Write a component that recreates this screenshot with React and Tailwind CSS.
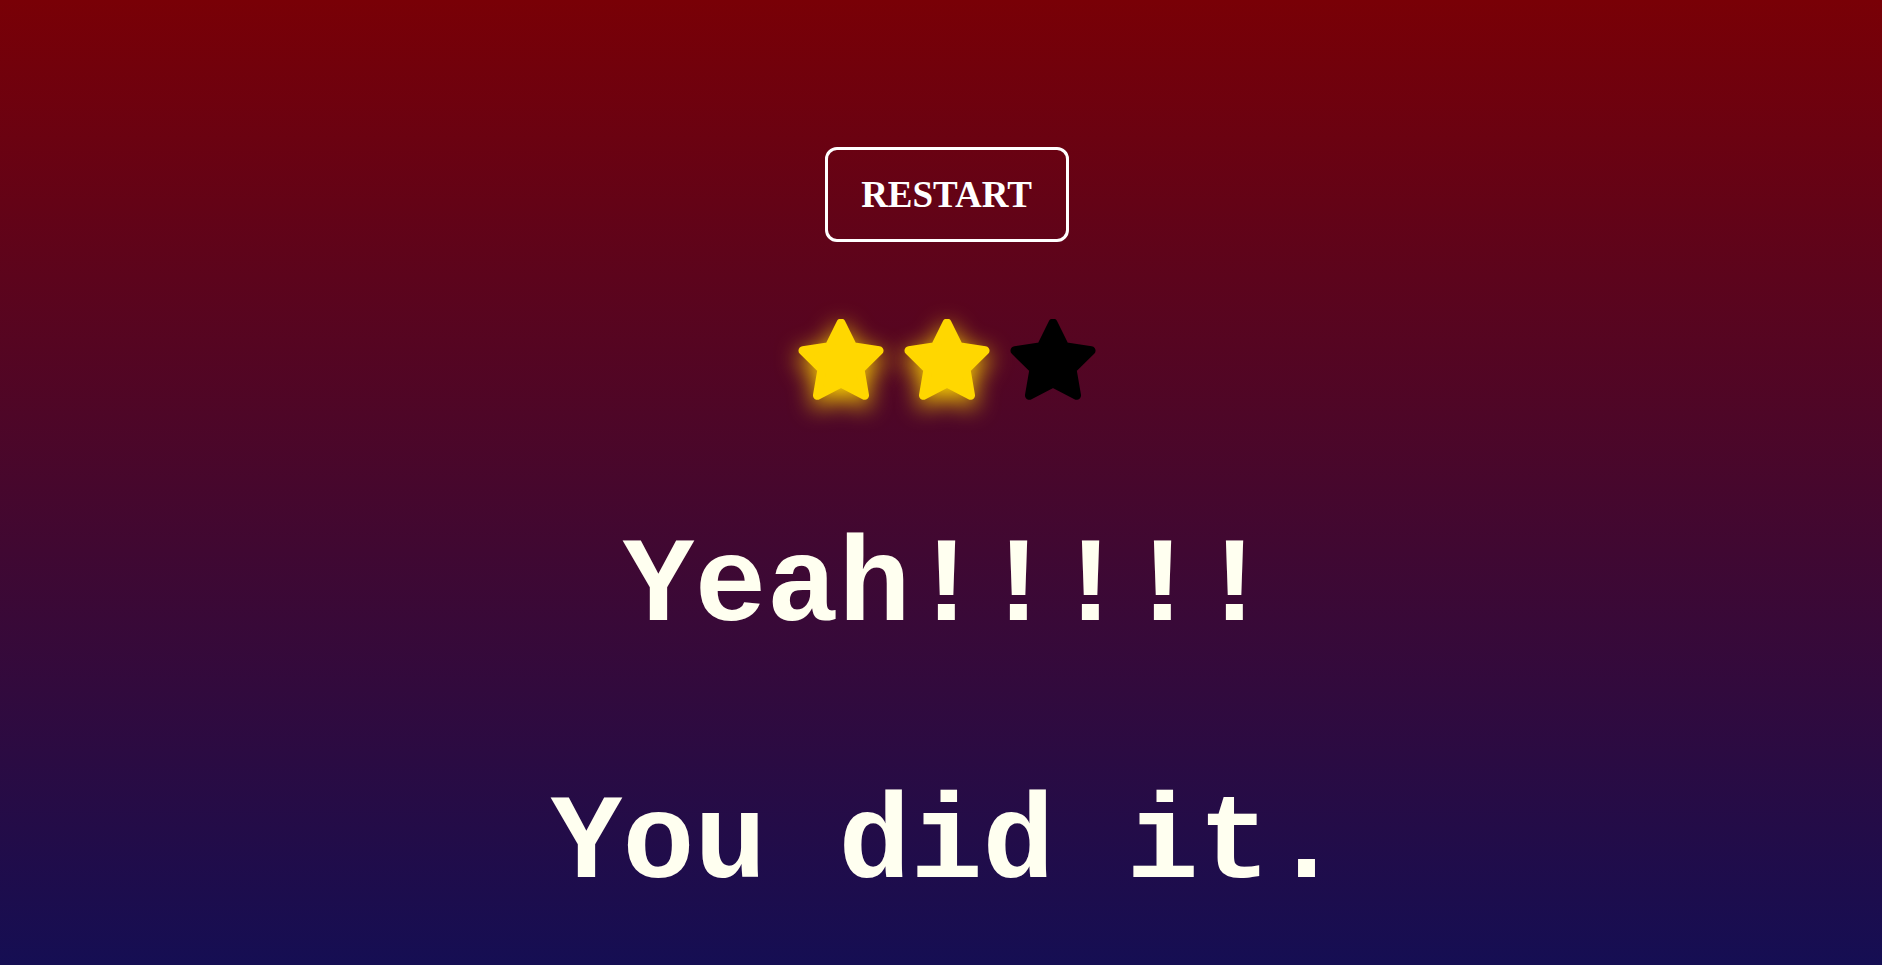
import React from 'react';

const Star = ({ filled }) => {
  const pts = [];
  for (let i = 0; i < 10; i++) {
    const r = i % 2 === 0 ? 40 : 20;
    const a = (Math.PI / 5) * i - Math.PI / 2;
    pts.push(`${(r * Math.cos(a)).toFixed(2)},${(r * Math.sin(a)).toFixed(2)}`);
  }
  const color = filled ? '#ffd700' : '#000000';
  return (
    <svg
      width="96"
      height="96"
      viewBox="-48 -44 96 96"
      className={filled ? 'drop-shadow-[0_7px_12px_#ffd700]' : ''}
    >
      <polygon points={pts.join(' ')} fill={color} stroke={color} strokeWidth="9" strokeLinejoin="round" />
    </svg>
  );
};

const monoFont = "font-['Courier_New','Nimbus_Mono_PS','FreeMono','Courier','Liberation_Mono',monospace]";

const App = () => {
  const stars = 2;

  return (
    <div className="h-screen w-full overflow-hidden bg-[linear-gradient(#790006,#150e53)]">
      <div className="flex flex-col items-center pl-[11px] pt-[147px]">
        <button className="w-[244px] h-[95px] flex items-center justify-center border-[3px] border-white rounded-[12px] text-white text-[37px] font-bold font-['Liberation_Serif',serif] leading-none">
          RESTART
        </button>

        <div className="mt-[77px] flex gap-[10px]">
          {[0, 1, 2].map(i => (
            <Star key={i} filled={i < stars} />
          ))}
        </div>

        <h1 className={`mt-[113px] text-[120px] leading-[120px] font-bold text-[#fffff0] ${monoFont} whitespace-pre`}>
          Yeah!!!!!
        </h1>
        <p className={`mt-[137px] text-[120px] leading-[120px] font-bold text-[#fffff0] ${monoFont} whitespace-pre`}>
          You did it.
        </p>
      </div>
    </div>
  );
};

export default App;
